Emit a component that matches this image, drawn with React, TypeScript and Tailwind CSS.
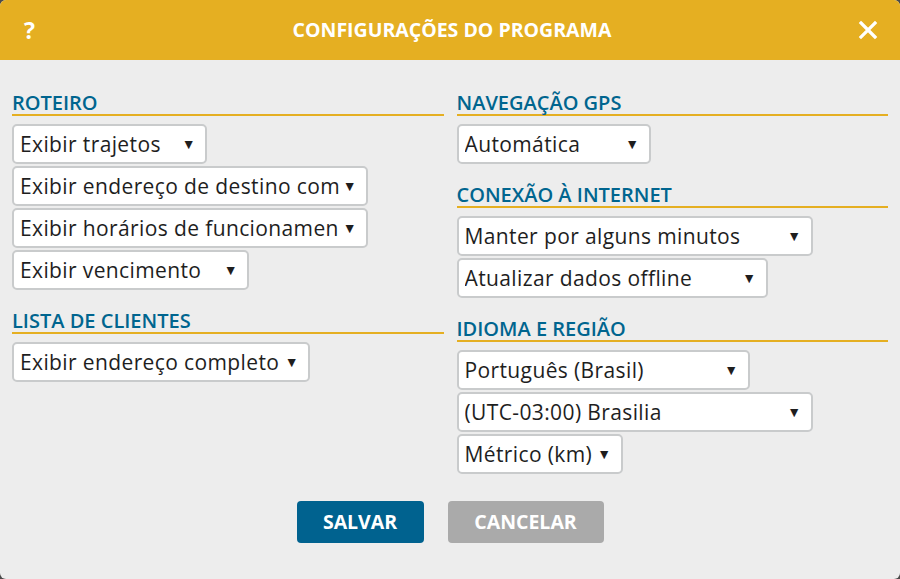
import React from "react";

const font = { fontFamily: '"Open Sans", "Liberation Sans", sans-serif' };

const Select = ({ label, w }: { label: string; w: string }) => (
  <div
    className={`${w} h-10 flex items-center justify-between bg-white border-2 border-[#c9cbcc] rounded-[5px] pl-[6px] pr-[9px] pt-[2px] text-[21px] tracking-[0.38px] text-[#1e1e1e] whitespace-nowrap overflow-hidden`}
  >
    <span className="overflow-hidden">{label}</span>
    <span className="text-[14px] ml-1 -mt-[4px] shrink-0">▼</span>
  </div>
);

const Heading = ({ children }: { children: React.ReactNode }) => (
  <div className="mt-[18px] mb-2 h-[26px] border-b-2 border-[#e5af22] text-[20px] font-semibold leading-[25px] text-[#00658f] uppercase">
    {children}
  </div>
);

export default function App() {
  return (
    <div className="w-[900px] h-[579px] bg-[#4b4b4b]" style={font}>
      <div className="h-full rounded-[6px] overflow-hidden bg-[#ededed] flex flex-col">
        {/* Header */}
        <div className="h-[60px] bg-[#e5af22] flex items-center justify-between pl-[24px] pr-[20px] text-white">
          <span className="text-[23px] font-bold w-6">?</span>
          <span className="text-[19.5px] font-bold">CONFIGURAÇÕES DO PROGRAMA</span>
          <svg width="24" height="24" viewBox="0 0 24 24">
            <path d="M5 5 L19 19 M19 5 L5 19" stroke="white" strokeWidth="3.2" strokeLinecap="square" />
          </svg>
        </div>

        {/* Body */}
        <div className="grid grid-cols-2 gap-x-[13px] px-3 pt-3">
          <div>
            <Heading>Roteiro</Heading>
            <div className="flex flex-col items-start gap-[2px]">
              <Select label="Exibir trajetos" w="w-[195px]" />
              <Select label="Exibir endereço de destino com" w="w-[356px]" />
              <Select label="Exibir horários de funcionamen" w="w-[356px]" />
              <Select label="Exibir vencimento" w="w-[237px]" />
            </div>
            <Heading>Lista de clientes</Heading>
            <Select label="Exibir endereço completo" w="w-[298px]" />
          </div>
          <div>
            <Heading>Navegação GPS</Heading>
            <Select label="Automática" w="w-[194px]" />
            <Heading>Conexão à internet</Heading>
            <div className="flex flex-col items-start gap-[2px]">
              <Select label="Manter por alguns minutos" w="w-[356px]" />
              <Select label="Atualizar dados offline" w="w-[311px]" />
            </div>
            <Heading>Idioma e região</Heading>
            <div className="flex flex-col items-start gap-[2px]">
              <Select label="Português (Brasil)" w="w-[293px]" />
              <Select label="(UTC-03:00) Brasilia" w="w-[356px]" />
              <Select label="Métrico (km)" w="w-[166px]" />
            </div>
          </div>
        </div>

        {/* Footer */}
        <div className="flex justify-center gap-6 mt-[27px]">
          <button className="w-[127px] h-[42px] rounded-[4px] bg-[#00628f] text-white text-[19.5px] font-bold">
            SALVAR
          </button>
          <button className="w-[156px] h-[42px] rounded-[4px] bg-[#aaaaaa] text-white text-[19.5px] font-bold">
            CANCELAR
          </button>
        </div>
      </div>
    </div>
  );
}
